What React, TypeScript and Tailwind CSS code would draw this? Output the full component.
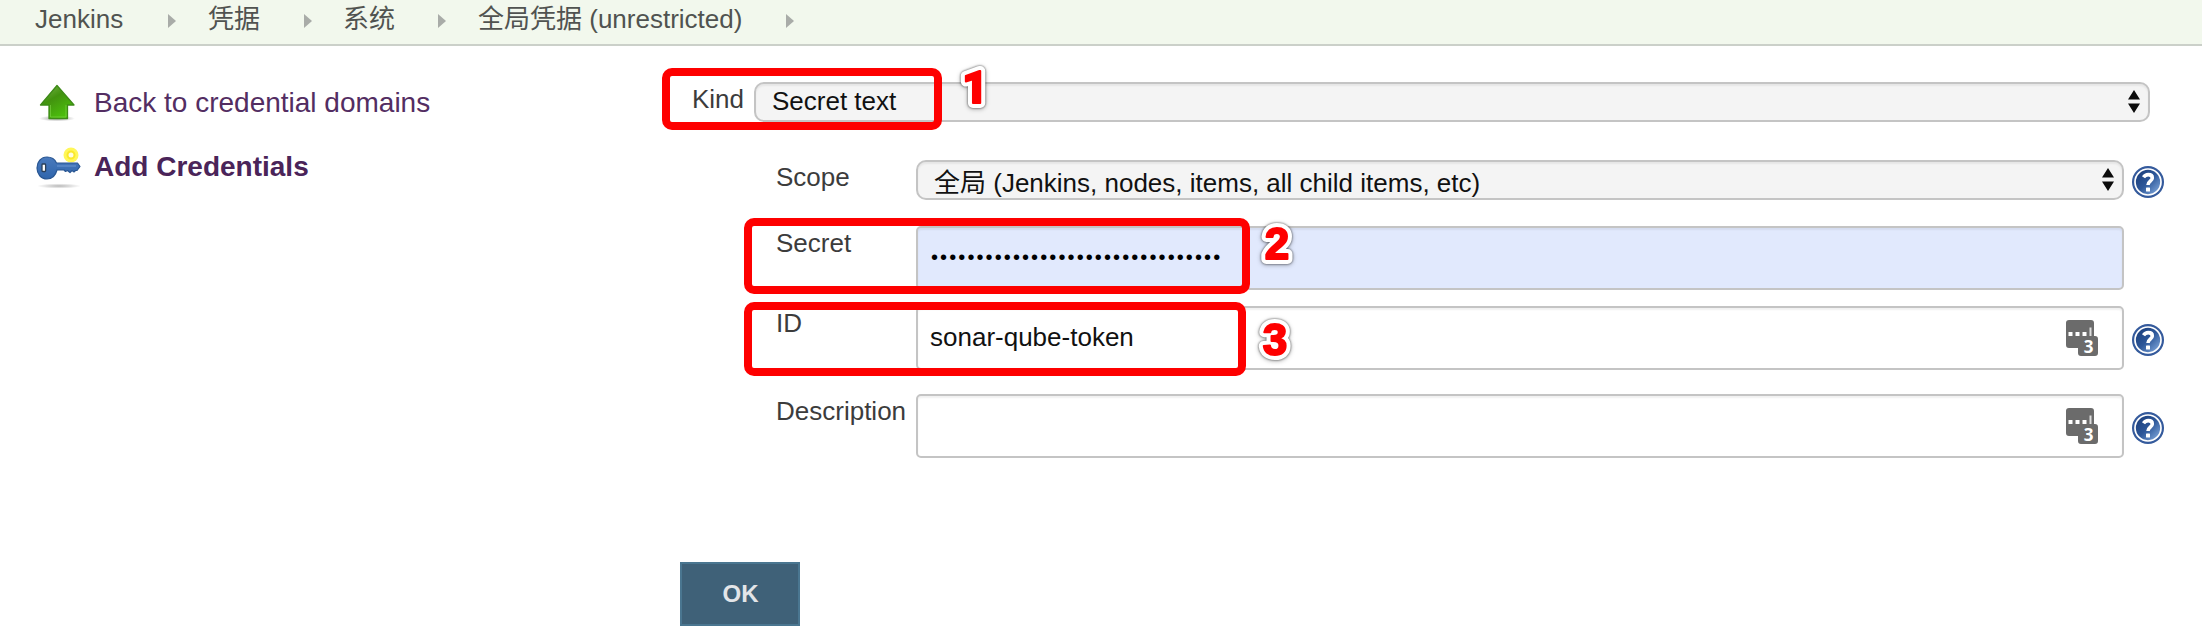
import type { ReactNode } from "react";

function CrumbArrow() {
  return (
    <svg className="mt-[14px] h-[14px] w-2 shrink-0" viewBox="0 0 8 14" aria-hidden="true">
      <path d="M0 0L8 7L0 14Z" fill="#a9aca8" />
    </svg>
  );
}

function UpArrow() {
  return (
    <svg className="block h-[40px] w-[36px]" viewBox="0 0 36 40" aria-hidden="true">
      <defs>
        <linearGradient id="upFill" x1="0" y1="0" x2="0.6" y2="1">
          <stop offset="0" stopColor="#7cb94e" />
          <stop offset="0.45" stopColor="#42920f" />
          <stop offset="1" stopColor="#4cc00c" />
        </linearGradient>
        <radialGradient id="upShade">
          <stop offset="0" stopColor="#000" stopOpacity="0.4" />
          <stop offset="1" stopColor="#000" stopOpacity="0" />
        </radialGradient>
      </defs>
      <ellipse cx="18" cy="35.500" rx="18" ry="3" fill="url(#upShade)" />
      <path d="M18 2.500L35 22H28.500V35.500H10V22H1.500Z" fill="url(#upFill)" stroke="#3d8a17" strokeWidth="1.3" strokeLinejoin="round" />
      <path d="M11.500 22V34H27V22" fill="none" stroke="#7ed64a" strokeOpacity="0.6" strokeWidth="1" />
    </svg>
  );
}

function KeyIcon() {
  return (
    <svg className="block h-[42px] w-[46px]" viewBox="0 0 46 42" aria-hidden="true">
      <defs>
        <radialGradient id="keyShade">
          <stop offset="0" stopColor="#000" stopOpacity="0.28" />
          <stop offset="1" stopColor="#000" stopOpacity="0" />
        </radialGradient>
        <linearGradient id="keyFill" x1="0" y1="0" x2="0" y2="1">
          <stop offset="0" stopColor="#4a7abd" />
          <stop offset="1" stopColor="#2f65ac" />
        </linearGradient>
      </defs>
      <ellipse cx="23" cy="39" rx="22" ry="2.600" fill="url(#keyShade)" />
      <circle cx="35" cy="8" r="7.500" fill="#fff75a" />
      <circle cx="35" cy="8" r="3.500" fill="#fffde0" stroke="#fbe92a" strokeWidth="2" />
      <path
        d="M11 10C15.500 10 19 12.500 20.500 16H41.500L44 19.500L41 23.500H39.500L38 25L36 23.500L34 25.500L31.500 23.500L29.500 24.500L28 23H21C19.500 28.500 16 32 11 32C5 32 1 27 1 21C1 15 5 10 11 10Z"
        fill="url(#keyFill)"
        stroke="#2a5793"
        strokeWidth="1.200"
        strokeLinejoin="round"
      />
      <path d="M21 19H40" stroke="#6b96d2" strokeWidth="1" />
      <rect x="6" y="17" width="3.600" height="7.500" rx="0.800" fill="#fff" stroke="#2b3f58" strokeWidth="1.300" />
    </svg>
  );
}

function HelpIcon() {
  return (
    <svg className="block h-8 w-8 shrink-0" viewBox="0 0 32 32" aria-hidden="true">
      <defs>
        <linearGradient id="helpFill" x1="0.1" y1="0.1" x2="0.9" y2="0.9">
          <stop offset="0" stopColor="#1c3f7c" />
          <stop offset="0.5" stopColor="#2d5799" />
          <stop offset="1" stopColor="#7ba3d8" />
        </linearGradient>
      </defs>
      <circle cx="16" cy="16" r="16" fill="#345a9c" />
      <circle cx="16" cy="16" r="13" fill="url(#helpFill)" stroke="#fff" strokeWidth="1.700" />
      <path d="M11.500 11.300C12.800 9.300 14.500 8.600 16.300 8.600C18.800 8.600 20.300 10 20.300 11.900C20.300 15.200 16 15.200 16 19" fill="none" stroke="#fff" strokeWidth="3.600" />
      <rect x="14" y="21.400" width="4" height="4.200" rx="0.600" fill="#fff" />
    </svg>
  );
}

function KeypadIcon() {
  return (
    <svg className="block h-9 w-8 shrink-0 overflow-visible" viewBox="0 0 32 36" aria-hidden="true">
      <path d="M3 0H25Q28 0 28 3V16H29Q32 16 32 19V33Q32 36 29 36H15Q12 36 12 33V28H3Q0 28 0 25V3Q0 0 3 0Z" fill="#6b6b6b" />
      <rect x="2.500" y="12" width="4" height="4" fill="#fff" />
      <rect x="9.500" y="12" width="4" height="4" fill="#fff" />
      <rect x="16.500" y="12" width="4" height="4" fill="#fff" />
      <rect x="23.500" y="7.500" width="2" height="8.500" fill="#ddd" />
      <text x="22.500" y="33" textAnchor="middle" fontFamily="Open Sans, Noto Sans, sans-serif" fontWeight="700" fontSize="17" fill="#fff">3</text>
    </svg>
  );
}

function Stepper() {
  return (
    <svg className="ml-auto h-[23px] w-3 shrink-0" viewBox="0 0 12 23" aria-hidden="true">
      <path d="M6 0L12 9.500H0ZM0 13.500H12L6 23Z" fill="#0c0c0c" />
    </svg>
  );
}

function Select({ children, className }: { children: ReactNode; className: string }) {
  return (
    <div className={`flex h-10 items-start rounded-[10px] border-2 border-[#c4c4c4] bg-[#f4f4f4] text-[#111] shadow-[inset_0_2px_2px_rgba(0,0,0,0.06)] ${className}`}>
      {children}
    </div>
  );
}

function Field({ label, children }: { label: string; children: ReactNode }) {
  return (
    <div className="flex items-start">
      <div className="w-[140px] shrink-0 pt-px">{label}</div>
      {children}
    </div>
  );
}

const inputBox =
  "flex h-16 w-[1208px] items-start rounded-[5px] border-2 border-[#c4c4c4] pl-3 text-[#111] shadow-[inset_0_2px_2px_rgba(0,0,0,0.06)]";

function Marker({ digit, family, className }: { digit: string; family: string; className: string }) {
  const shared = {
    x: 30,
    y: 46,
    textAnchor: "middle" as const,
    fontFamily: family,
    fontWeight: 900,
    fontSize: 44,
    strokeLinejoin: "round" as const,
  };
  return (
    <svg
      className={`absolute h-[60px] w-[60px] [filter:drop-shadow(0_0_1px_rgba(0,0,0,0.6))_drop-shadow(0_1px_2px_rgba(0,0,0,0.3))] ${className}`}
      viewBox="0 0 60 60"
    >
      <text {...shared} fill="#fe0000" stroke="#fff" strokeWidth="10" paintOrder="stroke">
        {digit}
      </text>
      <text {...shared} fill="#fe0000" stroke="#fe0000" strokeWidth="2" aria-hidden="true">
        {digit}
      </text>
    </svg>
  );
}

export default function App() {
  return (
    <div className="relative h-[642px] w-[2202px] overflow-hidden bg-white font-['Liberation_Sans','Noto_Sans_CJK_SC',sans-serif] text-[26px] leading-8 text-[#3c3c3c]">
      <header className="flex h-[46px] items-start border-b-2 border-[#cbd0c9] bg-[#f2f8ed] pl-[35px] text-[#505350]">
        <span className="w-[133px] pt-[3px]">Jenkins</span>
        <CrumbArrow />
        <span className="ml-[32px] w-[96px] pt-[3px]">凭据</span>
        <CrumbArrow />
        <span className="ml-[31px] w-[95px] pt-[3px]">系统</span>
        <CrumbArrow />
        <span className="ml-[32px] w-[308px] pt-[3px]">全局凭据 (unrestricted)</span>
        <CrumbArrow />
      </header>

      <main className="flex items-start">
        <nav className="w-[662px] shrink-0 pt-[37px] pl-9 text-[28px] text-[#532d62]">
          <div className="flex h-16 items-start">
            <span className="w-[58px] shrink-0 pl-[3px]">
              <UpArrow />
            </span>
            <span className="pt-1">Back to credential domains</span>
          </div>
          <div className="flex items-start">
            <span className="w-[58px] shrink-0">
              <KeyIcon />
            </span>
            <span className="pt-1 font-bold text-[#4a2459]">Add Credentials</span>
          </div>
        </nav>

        <section className="flex flex-col items-start pt-9">
          <div className="flex items-start pl-[30px]">
            <span className="w-[62px] shrink-0 pt-px">Kind</span>
            <Select className="w-[1396px] pr-2 pl-4">
              <span className="pt-px">Secret text</span>
              <span className="ml-auto pt-[6px]">
                <Stepper />
              </span>
            </Select>
          </div>

          <div className="flex flex-col pt-[38px] pl-[114px]">
            <Field label="Scope">
              <Select className="w-[1208px] pr-2 pl-4">
                <span className="pt-[5px]">全局 (Jenkins, nodes, items, all child items, etc)</span>
                <span className="ml-auto pt-[6px]">
                  <Stepper />
                </span>
              </Select>
              <span className="pt-[6px] pl-2">
                <HelpIcon />
              </span>
            </Field>
            <div className="mt-[26px]">
              <Field label="Secret">
                <div className={`${inputBox} bg-[#e1e9fd]`}>
                  <span className="pt-[13px] pl-px text-[20px] tracking-[2.1px] text-black">{"•".repeat(32)}</span>
                </div>
              </Field>
            </div>
            <div className="mt-4">
              <Field label="ID">
                <div className={`${inputBox} bg-white`}>
                  <span className="pt-[13px]">sonar-qube-token</span>
                  <span className="ml-auto pt-3 pr-6">
                    <KeypadIcon />
                  </span>
                </div>
                <span className="pt-[18px] pl-2">
                  <HelpIcon />
                </span>
              </Field>
            </div>
            <div className="mt-6">
              <Field label="Description">
                <div className={`${inputBox} bg-white`}>
                  <span className="ml-auto pt-3 pr-6">
                    <KeypadIcon />
                  </span>
                </div>
                <span className="pt-[18px] pl-2">
                  <HelpIcon />
                </span>
              </Field>
            </div>
          </div>

          <button className="mt-[104px] ml-[18px] flex h-16 w-[120px] items-center justify-center border-2 border-[#4a7690] bg-[#3f6178] pb-px pl-px text-[24px] font-bold text-[#e3e5e8]">
            OK
          </button>
        </section>
      </main>

      <div className="absolute top-[68px] left-[662px] h-[62px] w-[280px] rounded-[10px] border-8 border-[#fe0000]" />
      <div className="absolute top-[218px] left-[744px] h-[76px] w-[506px] rounded-[10px] border-8 border-[#fe0000]" />
      <div className="absolute top-[302px] left-[744px] h-[74px] w-[502px] rounded-[10px] border-8 border-[#fe0000]" />
      <Marker digit="1" family="Roboto, sans-serif" className="top-[57px] left-[945px]" />
      <Marker digit="2" family="Liberation Sans, sans-serif" className="top-[213px] left-[1247px]" />
      <Marker digit="3" family="Liberation Sans, sans-serif" className="top-[309px] left-[1245px]" />
    </div>
  );
}
